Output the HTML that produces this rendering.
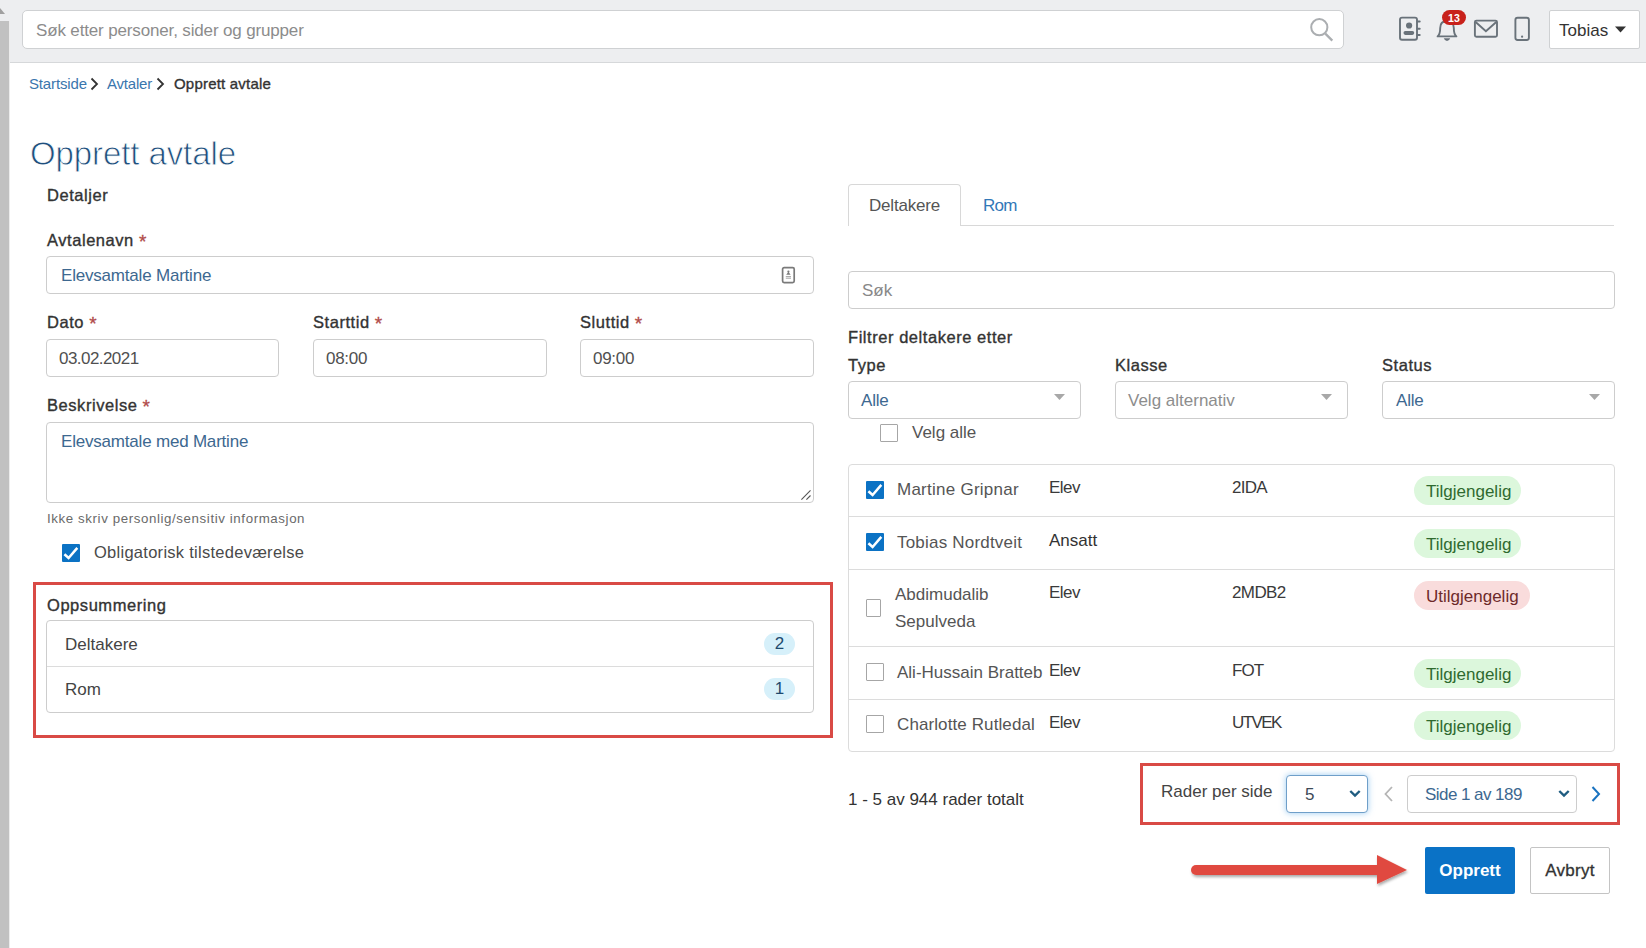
<!DOCTYPE html>
<html><head><meta charset="utf-8">
<style>
*{box-sizing:border-box;margin:0;padding:0}
html,body{width:1646px;height:948px;overflow:hidden;background:#fff}
body{font-family:"Liberation Sans",sans-serif;color:#333;position:relative}
.a{position:absolute}
.t{position:absolute;white-space:nowrap;line-height:1}
.box{position:absolute;border:1px solid #cdcdcd;border-radius:4px;background:#fff}
#hdr{left:0;top:0;width:1646px;height:63px;background:#edeef0;border-bottom:1px solid #d6d8da}
#lbar{left:0;top:21px;width:10px;height:927px;background:#c1c1c1;border-right:1px solid #ececec}
.lbl{font-size:16.5px;color:#333;-webkit-text-stroke:0.35px #333;letter-spacing:0.55px}
.req{color:#b04a48;-webkit-text-stroke:0.3px #b04a48;margin-left:0;font-size:19px;letter-spacing:0;line-height:0;position:relative;top:1.5px}
.val{font-size:17px;color:#3d6890;letter-spacing:-0.2px}
.txt{font-size:17px;color:#444}
.red{position:absolute;border:3px solid #d94a45}
.cb{position:absolute;width:18px;height:18px;background:#0b72c4;border-radius:1px}
.cbe{position:absolute;width:18px;height:18px;border:1px solid #a6a6a6;background:#fff;border-radius:1px}
.badge{position:absolute;border-radius:15px}
.g{background:#dcf7dc;color:#2f6a2f}
.r{background:#f9dcdc;color:#6d2a2a}
.cnt{position:absolute;background:#d6f0fa;border-radius:11px}
.hl{position:absolute;height:1px;background:#dcdcdc}
</style></head>
<body>
<div id="hdr" class="a"></div>
<div id="lbar" class="a"></div>
<svg class="a" style="left:0;top:7px" width="6" height="8"><path d="M0 1 L5 7 L0 7Z" fill="#a0a0a0"/></svg>

<!-- search -->
<div class="box" style="left:22px;top:10px;width:1322px;height:39px;border-color:#cfd1d3;border-radius:5px"></div>
<div class="t" style="left:36px;top:22px;font-size:17px;color:#8c8c8c;letter-spacing:-0.15px">Søk etter personer, sider og grupper</div>
<svg class="a" style="left:1306px;top:14px" width="32" height="30"><circle cx="13.3" cy="13.2" r="8.1" fill="none" stroke="#abaeb1" stroke-width="2"/><path d="M19.3 19.6 L26.3 26.6" stroke="#abaeb1" stroke-width="2.3"/></svg>

<!-- header icons -->
<svg class="a" style="left:1396px;top:14px" width="28" height="30">
 <rect x="4" y="3.6" width="17" height="22.2" rx="2" fill="none" stroke="#69727a" stroke-width="1.9"/>
 <path d="M21.5 7.4h2.2M21.5 14.7h2.2M21.5 21.1h2.2" stroke="#69727a" stroke-width="2" stroke-linecap="round"/>
 <circle cx="13.1" cy="11.5" r="3.1" fill="#69727a"/>
 <rect x="7.5" y="17" width="10.7" height="3.9" rx="1.8" fill="#69727a"/>
</svg>
<svg class="a" style="left:1432px;top:14px" width="30" height="30">
 <path d="M5.6 22.4 q2.6-2.2 2.6-8.4 q0-7 6.8-7 q6.8 0 6.8 7 q0 6.2 2.6 8.4z" fill="none" stroke="#69727a" stroke-width="1.9" stroke-linejoin="round"/>
 <path d="M11.8 24.2 h6.4 q-1 2.8 -3.2 2.8 q-2.2 0 -3.2 -2.8z" fill="#69727a"/>
</svg>
<div class="a" style="left:1442px;top:10px;width:24px;height:15px;background:#c8211b;border-radius:8px"></div>
<div class="t" style="left:1442px;top:13.3px;width:24px;text-align:center;font-size:10.6px;font-weight:bold;color:#fff">13</div>
<svg class="a" style="left:1470px;top:14px" width="32" height="28">
 <rect x="4.9" y="6.6" width="22.1" height="16.2" rx="1.5" fill="none" stroke="#69727a" stroke-width="1.9"/>
 <path d="M5.6 8 L15.9 17.2 L26.3 8" fill="none" stroke="#69727a" stroke-width="1.9"/>
</svg>
<svg class="a" style="left:1510px;top:14px" width="24" height="30">
 <rect x="5.4" y="3.7" width="13.5" height="22.3" rx="2.2" fill="none" stroke="#69727a" stroke-width="1.9"/>
 <circle cx="12.1" cy="22.7" r="1.1" fill="#69727a"/>
</svg>
<div class="box" style="left:1549px;top:10px;width:91px;height:39px;border-color:#cfd1d3;border-radius:2px"></div>
<div class="t" style="left:1559px;top:22px;font-size:17px;color:#333">Tobias</div>
<svg class="a" style="left:1614px;top:26px" width="14" height="8"><path d="M1 0.5 L12 0.5 L6.5 6.5Z" fill="#333"/></svg>

<!-- breadcrumb -->
<div class="t" style="left:29px;top:76px;font-size:15px;color:#3a76ad;letter-spacing:-0.15px">Startside</div>
<svg class="a" style="left:89px;top:76px" width="12" height="16"><path d="M2.5 2.5 L8 8 L2.5 13.5" fill="none" stroke="#333" stroke-width="1.8"/></svg>
<div class="t" style="left:107px;top:76px;font-size:15px;color:#3a76ad;letter-spacing:-0.2px">Avtaler</div>
<svg class="a" style="left:155px;top:76px" width="12" height="16"><path d="M2.5 2.5 L8 8 L2.5 13.5" fill="none" stroke="#333" stroke-width="1.8"/></svg>
<div class="t" style="left:174px;top:76px;font-size:15px;color:#333;-webkit-text-stroke:0.35px #333;letter-spacing:0.2px">Opprett avtale</div>

<!-- title -->
<div class="t" style="left:30px;top:137px;font-size:33px;color:#1f4f7d;letter-spacing:-0.1px;-webkit-text-stroke:0.8px #fff">Opprett avtale</div>

<div class="t lbl" style="left:47px;top:187px">Detaljer</div>

<div class="t lbl" style="left:47px;top:232px">Avtalenavn <span class="req">*</span></div>
<div class="box" style="left:46px;top:256px;width:768px;height:38px"></div>
<div class="t val" style="left:61px;top:267px">Elevsamtale Martine</div>
<svg class="a" style="left:779px;top:265px" width="18" height="20">
 <rect x="3.6" y="2.6" width="11.6" height="15" rx="1.5" fill="none" stroke="#7a7a7a" stroke-width="1.7"/>
 <circle cx="9.4" cy="6.6" r="1.1" fill="#7a7a7a"/><path d="M7.2 9.8 L9.4 6.8 L11.6 9.8Z" fill="#7a7a7a"/>
 <path d="M6.8 11.6h5.2M6.8 13.2h5.2" stroke="#9a9a9a" stroke-width="0.9"/>
</svg>

<div class="t lbl" style="left:47px;top:314px">Dato <span class="req">*</span></div>
<div class="t lbl" style="left:313px;top:314px">Starttid <span class="req">*</span></div>
<div class="t lbl" style="left:580px;top:314px">Sluttid <span class="req">*</span></div>
<div class="box" style="left:46px;top:339px;width:233px;height:38px"></div>
<div class="box" style="left:313px;top:339px;width:234px;height:38px"></div>
<div class="box" style="left:580px;top:339px;width:234px;height:38px"></div>
<div class="t txt" style="color:#505050;left:59px;top:350px;letter-spacing:-0.55px">03.02.2021</div>
<div class="t txt" style="color:#505050;left:326px;top:350px;letter-spacing:-0.3px">08:00</div>
<div class="t txt" style="color:#505050;left:593px;top:350px;letter-spacing:-0.3px">09:00</div>

<div class="t lbl" style="left:47px;top:397px">Beskrivelse <span class="req">*</span></div>
<div class="box" style="left:46px;top:422px;width:768px;height:81px"></div>
<svg class="a" style="left:800px;top:489px" width="12" height="12"><path d="M1.4 10.6 L10.5 1.3 M6.4 10.6 L10.5 6.5" stroke="#555" stroke-width="1.1"/></svg>
<div class="t val" style="left:61px;top:433px">Elevsamtale med Martine</div>
<div class="t" style="left:47px;top:512px;font-size:13.3px;color:#6a6a6a;letter-spacing:0.6px">Ikke skriv personlig/sensitiv informasjon</div>
<div class="cb" style="left:62px;top:544px"></div>
<svg class="a" style="left:62px;top:544px" width="18" height="18"><path d="M2.4 10.2 L6.6 14 L15.3 3.9" fill="none" stroke="#fff" stroke-width="2.5"/></svg>
<div class="t" style="left:94px;top:544px;font-size:16.5px;color:#4a4a4a;letter-spacing:0.27px">Obligatorisk tilstedeværelse</div>

<!-- oppsummering -->
<div class="red" style="left:33px;top:582px;width:800px;height:156px"></div>
<div class="t lbl" style="left:47px;top:597px">Oppsummering</div>
<div class="box" style="left:46px;top:620px;width:768px;height:93px"></div>
<div class="hl" style="left:47px;top:666px;width:766px"></div>
<div class="t txt" style="left:65px;top:636px">Deltakere</div>
<div class="t txt" style="left:65px;top:681px">Rom</div>
<div class="cnt" style="left:764px;top:633px;width:31px;height:22px"></div>
<div class="t" style="left:764px;top:635px;width:31px;text-align:center;font-size:17px;color:#1d4a6e">2</div>
<div class="cnt" style="left:764px;top:678px;width:31px;height:22px"></div>
<div class="t" style="left:764px;top:680px;width:31px;text-align:center;font-size:17px;color:#1d4a6e">1</div>

<!-- tabs -->
<div class="hl" style="left:848px;top:225px;width:766px;background:#d8d8d8"></div>
<div class="a" style="left:848px;top:184px;width:113px;height:42px;border:1px solid #d8d8d8;border-bottom:none;border-radius:4px 4px 0 0;background:#fff"></div>
<div class="t" style="left:869px;top:197px;font-size:17px;color:#555;letter-spacing:-0.2px">Deltakere</div>
<div class="t" style="left:983px;top:197px;font-size:17px;color:#3278b8;letter-spacing:-0.8px">Rom</div>

<div class="box" style="left:848px;top:271px;width:767px;height:38px"></div>
<div class="t" style="left:862px;top:282px;font-size:17px;color:#888">Søk</div>

<div class="t lbl" style="left:848px;top:329px">Filtrer deltakere etter</div>
<div class="t lbl" style="left:848px;top:357px">Type</div>
<div class="t lbl" style="left:1115px;top:357px">Klasse</div>
<div class="t lbl" style="left:1382px;top:357px">Status</div>
<div class="box" style="left:848px;top:381px;width:233px;height:38px"></div>
<div class="box" style="left:1115px;top:381px;width:233px;height:38px"></div>
<div class="box" style="left:1382px;top:381px;width:233px;height:38px"></div>
<div class="t val" style="left:861px;top:392px">Alle</div>
<div class="t" style="left:1128px;top:392px;font-size:17px;color:#8d8d8d">Velg alternativ</div>
<div class="t val" style="left:1396px;top:392px">Alle</div>
<svg class="a" style="left:1054px;top:394px" width="12" height="7"><path d="M0 0 H11 L5.5 6Z" fill="#a8a8a8"/></svg>
<svg class="a" style="left:1321px;top:394px" width="12" height="7"><path d="M0 0 H11 L5.5 6Z" fill="#a8a8a8"/></svg>
<svg class="a" style="left:1589px;top:394px" width="12" height="7"><path d="M0 0 H11 L5.5 6Z" fill="#a8a8a8"/></svg>

<div class="cbe" style="left:880px;top:424px"></div>
<div class="t" style="left:912px;top:424px;font-size:17px;color:#555">Velg alle</div>

<!-- table -->
<div class="box" style="left:848px;top:464px;width:767px;height:288px;border-color:#dcdcdc"></div>
<div class="hl" style="left:849px;top:516px;width:765px"></div>
<div class="hl" style="left:849px;top:569px;width:765px"></div>
<div class="hl" style="left:849px;top:646px;width:765px"></div>
<div class="hl" style="left:849px;top:699px;width:765px"></div>

<div class="cb" style="left:866px;top:481px"></div>
<svg class="a" style="left:866px;top:481px" width="18" height="18"><path d="M2.4 10.2 L6.6 14 L15.3 3.9" fill="none" stroke="#fff" stroke-width="2.5"/></svg>
<div class="t txt" style="left:897px;top:481px;letter-spacing:0.25px;color:#555">Martine Gripnar</div>
<div class="t txt" style="left:1049px;top:479px;color:#3a3a3a;letter-spacing:-0.5px">Elev</div>
<div class="t txt" style="left:1232px;top:479px;color:#3a3a3a;letter-spacing:-0.7px">2IDA</div>
<div class="badge g" style="left:1414px;top:476px;width:107px;height:29px"></div>
<div class="t" style="left:1426px;top:483px;font-size:17px;color:#2f6a2f">Tilgjengelig</div>

<div class="cb" style="left:866px;top:533px"></div>
<svg class="a" style="left:866px;top:533px" width="18" height="18"><path d="M2.4 10.2 L6.6 14 L15.3 3.9" fill="none" stroke="#fff" stroke-width="2.5"/></svg>
<div class="t txt" style="left:897px;top:534px;letter-spacing:0.2px;color:#555">Tobias Nordtveit</div>
<div class="t txt" style="left:1049px;top:532px;color:#333">Ansatt</div>
<div class="badge g" style="left:1414px;top:529px;width:107px;height:29px"></div>
<div class="t" style="left:1426px;top:536px;font-size:17px;color:#2f6a2f">Tilgjengelig</div>

<div class="cbe" style="left:866px;top:599px;width:15px"></div>
<div class="t txt" style="left:895px;top:586px;color:#555">Abdimudalib</div>
<div class="t txt" style="left:895px;top:613px;color:#555">Sepulveda</div>
<div class="t txt" style="left:1049px;top:584px;color:#3a3a3a;letter-spacing:-0.5px">Elev</div>
<div class="t txt" style="left:1232px;top:584px;color:#3a3a3a;letter-spacing:-0.6px">2MDB2</div>
<div class="badge r" style="left:1414px;top:581px;width:116px;height:29px"></div>
<div class="t" style="left:1426px;top:588px;font-size:17px;color:#6d2a2a">Utilgjengelig</div>

<div class="cbe" style="left:866px;top:663px"></div>
<div class="t txt" style="left:897px;top:664px;color:#555">Ali-Hussain Bratteb</div>
<div class="t txt" style="left:1049px;top:662px;color:#3a3a3a;letter-spacing:-0.5px">Elev</div>
<div class="t txt" style="left:1232px;top:662px;color:#3a3a3a;letter-spacing:-0.9px">FOT</div>
<div class="badge g" style="left:1414px;top:659px;width:107px;height:29px"></div>
<div class="t" style="left:1426px;top:666px;font-size:17px;color:#2f6a2f">Tilgjengelig</div>

<div class="cbe" style="left:866px;top:715px"></div>
<div class="t txt" style="left:897px;top:716px;letter-spacing:0.1px;color:#555">Charlotte Rutledal</div>
<div class="t txt" style="left:1049px;top:714px;color:#3a3a3a;letter-spacing:-0.5px">Elev</div>
<div class="t txt" style="left:1232px;top:714px;color:#3a3a3a;letter-spacing:-1.6px">UTVEK</div>
<div class="badge g" style="left:1414px;top:711px;width:107px;height:29px"></div>
<div class="t" style="left:1426px;top:718px;font-size:17px;color:#2f6a2f">Tilgjengelig</div>

<!-- pagination -->
<div class="t txt" style="left:848px;top:791px;color:#333">1 - 5 av 944 rader totalt</div>
<div class="red" style="left:1140px;top:763px;width:480px;height:62px"></div>
<div class="t txt" style="left:1161px;top:783px;color:#444">Rader per side</div>
<div class="box" style="left:1286px;top:775px;width:82px;height:38px;border-color:#6f9fc9;box-shadow:0 0 6px rgba(102,175,233,.65)"></div>
<div class="t" style="left:1305px;top:786px;font-size:17px;color:#3d4a57">5</div>
<svg class="a" style="left:1348px;top:788px" width="14" height="12"><path d="M2.3 3 L7 7.6 L11.7 3" fill="none" stroke="#1f5c80" stroke-width="2.4"/></svg>
<svg class="a" style="left:1382px;top:785px" width="14" height="18"><path d="M10 2 L3.5 9 L10 16" fill="none" stroke="#b5b5b5" stroke-width="1.8"/></svg>
<div class="box" style="left:1407px;top:775px;width:170px;height:38px"></div>
<div class="t val" style="left:1425px;top:786px;letter-spacing:-0.55px">Side 1 av 189</div>
<svg class="a" style="left:1557px;top:788px" width="14" height="12"><path d="M2.3 3 L7 7.6 L11.7 3" fill="none" stroke="#1f5c80" stroke-width="2.4"/></svg>
<svg class="a" style="left:1589px;top:785px" width="14" height="18"><path d="M3.5 2 L10 9 L3.5 16" fill="none" stroke="#1a73c0" stroke-width="2"/></svg>

<!-- buttons -->
<div class="a" style="left:1425px;top:847px;width:90px;height:47px;background:#0a72c6;border-radius:2px"></div>
<div class="t" style="left:1425px;top:862px;width:90px;text-align:center;font-size:17px;font-weight:bold;color:#fff">Opprett</div>
<div class="box" style="left:1530px;top:847px;width:80px;height:47px;border-radius:2px;border-color:#c4c4c4"></div>
<div class="t" style="left:1530px;top:862px;width:80px;text-align:center;font-size:17px;color:#333;letter-spacing:0.3px;-webkit-text-stroke:0.3px #333">Avbryt</div>

<!-- arrow -->
<svg class="a" style="left:1180px;top:845px" width="240" height="50">
 <defs><filter id="sh" x="-10%" y="-50%" width="120%" height="200%"><feGaussianBlur in="SourceAlpha" stdDeviation="1.5"/><feOffset dx="1" dy="2"/><feComponentTransfer><feFuncA type="linear" slope="0.35"/></feComponentTransfer><feMerge><feMergeNode/><feMergeNode in="SourceGraphic"/></feMerge></filter></defs>
 <g filter="url(#sh)">
 <path d="M16 25 H200" stroke="#e0493f" stroke-width="10" stroke-linecap="round"/>
 <path d="M197 10 L227 25 L197 39Z" fill="#e0493f"/>
 </g>
</svg>
</body></html>
